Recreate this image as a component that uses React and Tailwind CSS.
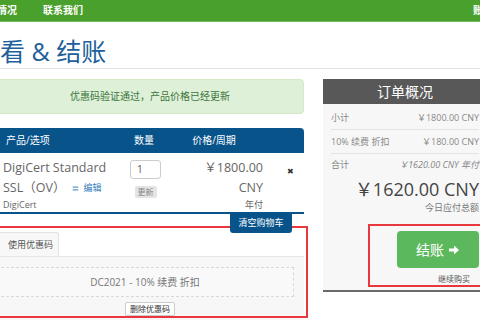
import React from "react";

const F = { fontFamily: '"Open Sans", "Noto Sans CJK SC", sans-serif' };

function Pencil() {
  return (
    <svg width="7" height="7" viewBox="0 0 10 10" className="inline-block">
      <path d="M1 3h8M1 7h8" stroke="#337ab7" strokeWidth="1.4" />
    </svg>
  );
}

function Arrow() {
  return (
    <svg width="12" height="12" viewBox="0 0 12 12" className="inline-block">
      <path d="M1 4.5h5V1.5L11 6 6 10.5V7.5H1z" fill="#fff" />
    </svg>
  );
}

export default function App() {
  return (
    <div className="relative w-[480px] h-[320px] overflow-hidden bg-white" style={F}>
      {/* nav */}
      <div className="h-[22px] bg-[#4aa02c] border-b border-[#72bb57] flex items-center text-[10px] font-bold text-white relative whitespace-nowrap">
        <span className="-ml-[23px]">账户情况</span>
        <span className="ml-[26px]">联系我们</span>
        <span className="absolute left-[473px]">账户</span>
      </div>
      {/* title */}
      <div className="h-[47px] border-b border-[#e2e2e2] flex items-end pb-[1px]">
        <h1 className="-ml-[25px] text-[25px] leading-[32px] text-[#21609a] whitespace-nowrap">查看 &amp; 结账</h1>
      </div>
      <div className="flex mt-[10px]">
        {/* left column */}
        <div className="-ml-[4px] w-[308px] shrink-0">
          <div className="h-[35px] bg-[#dff0d8] border border-[#d6e9c6] rounded flex items-center justify-center text-[10px] text-[#3c763d]">
            优惠码验证通过，产品价格已经更新
          </div>
          <div className="mt-[14px] h-[25px] bg-[#07538a] rounded-tr flex items-center text-[10px] text-white">
            <span className="pl-[10px] w-[130px]">产品/选项</span>
            <span className="w-[36px] text-center">数量</span>
            <span className="w-[104px] text-center">价格/周期</span>
          </div>
          <div className="h-[61px] border-b-2 border-[#07538a] flex text-[#666]">
            <div className="w-[134px] pl-[7px] pt-[5px]">
              <div className="text-[12.5px] leading-[20px] whitespace-nowrap">DigiCert Standard</div>
              <div className="text-[12.5px] leading-[20px] whitespace-nowrap flex items-center">
                SSL（OV）
                <span className="ml-[7px] flex items-center gap-[4px] text-[9px] text-[#337ab7]"><Pencil />编辑</span>
              </div>
              <div className="text-[9px] leading-[14px]">DigiCert</div>
            </div>
            <div className="w-[31px] pt-[7px] flex flex-col items-center">
              <div className="w-[31px] h-[19px] border border-[#ccc] rounded-[3px] text-[10px] text-[#555] pl-[6px] leading-[17px]">1</div>
              <div className="mt-[7px] w-[22px] h-[12px] bg-[#e4e4e4] rounded-[2px] text-[8px] leading-[12px] text-[#888] text-center">更新</div>
            </div>
            <div className="w-[102px] pt-[5px] text-right">
              <div className="text-[12.5px] leading-[20px]">￥1800.00</div>
              <div className="text-[12.5px] leading-[20px]">CNY</div>
              <div className="text-[9px] leading-[14px]">年付</div>
            </div>
            <div className="pl-[24px] pt-[12px] text-[8px] text-[#333]">✖</div>
          </div>
          <div className="flex justify-end pr-[12px]">
            <div className="relative z-10 w-[62px] h-[19px] bg-[#07538a] rounded-b-[3px] text-[9px] text-white text-center leading-[17px]">清空购物车</div>
          </div>
          {/* promo tabs */}
          <div className="h-[24px] flex items-end border-b border-[#e6e6e6]">
            <div className="w-[63px] h-[24px] bg-[#f8f8f8] border border-b-0 border-[#e2e2e2] rounded-t-[3px] text-[9px] text-[#555] flex items-center justify-center pl-[6px]">使用优惠码</div>
          </div>
          <div className="bg-[#f7f7f7] pt-[10px] pr-[10px] h-[70px]">
            <div className="h-[30px] border border-dashed border-[#d8d8d8] bg-[#f9f9f9] flex items-center justify-center text-[10px] text-[#777]">
              DC2021 - 10% 续费 折扣
            </div>
            <div className="mt-[5px] flex justify-center pl-[10px]">
              <div className="h-[14px] px-[4px] bg-white border border-[#ccc] rounded-[2px] text-[8px] leading-[12px] text-[#333]">删除优惠码</div>
            </div>
          </div>
        </div>
        {/* right column */}
        <div className="ml-[19px] w-[164px] shrink-0">
          <div className="h-[25px] bg-[#585858] text-white text-[14px] flex items-center justify-center">订单概况</div>
          <div className="bg-[#f7f7f7] px-[8px] h-[188px] border-b-2 border-[#6a6a6a] text-[#888]">
            <div className="h-[26px] pt-[3px] border-b border-[#e3e3e3] flex items-center justify-between text-[9px]">
              <span>小计</span><span>￥1800.00 CNY</span>
            </div>
            <div className="h-[24px] border-b border-[#e3e3e3] flex items-center justify-between text-[9px]">
              <span>10% 续费 折扣</span><span>￥180.00 CNY</span>
            </div>
            <div className="h-[22px] flex items-center justify-between text-[9px]">
              <span>合计</span><span className="italic">￥1620.00 CNY 年付</span>
            </div>
            <div className="text-right text-[18px] leading-[24px] text-[#444] mt-[1px] whitespace-nowrap">￥1620.00 CNY</div>
            <div className="text-right text-[9px] leading-[12px] text-[#777] mt-[1px]">今日应付总额</div>
            <div className="flex justify-end mt-[17px]">
              <div className="w-[82px] h-[37px] bg-[#5cb85c] rounded-[4px] flex items-center justify-center gap-[4px] text-white text-[14px]">
                结账 <Arrow />
              </div>
            </div>
            <div className="flex justify-end pr-[9px] mt-[5px] text-[8px] text-[#555]">继续购买</div>
          </div>
        </div>
      </div>
      {/* annotation boxes */}
      <div className="absolute left-[-3px] top-[226px] w-[311px] h-[92px] border-2 border-[#e8383d]"></div>
      <div className="absolute left-[368px] top-[224px] w-[120px] h-[63px] border-2 border-[#e8383d]"></div>
    </div>
  );
}
